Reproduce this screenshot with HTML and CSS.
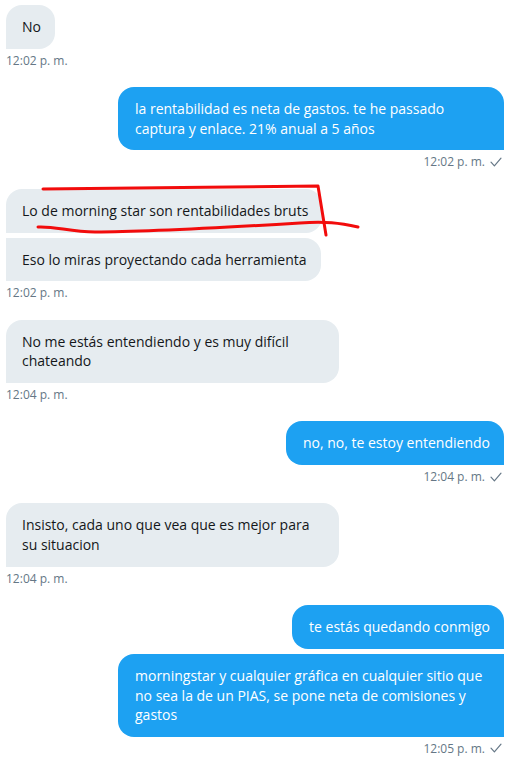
FILE: index.html
```html
<!DOCTYPE html>
<html lang="es">
<head>
<meta charset="utf-8">
<title>Mensajes</title>
<link rel="stylesheet" href="styles.css">
</head>
<body>
<main class="chat">
  <section class="group recv">
    <div class="bubble">No</div>
    <div class="time">12:02 p. m.</div>
  </section>

  <section class="group sent">
    <div class="bubble">la rentabilidad es neta de gastos. te he passado captura y enlace. 21% anual a 5 años</div>
    <div class="time">12:02 p. m. <svg class="check" viewBox="0 0 12 10" width="12" height="10"><path d="M1 5.2 L4.4 8.8 L11 1.2"/></svg></div>
  </section>

  <section class="group recv">
    <div class="bubble">Lo de morning star son rentabilidades bruts</div>
    <div class="bubble">Eso lo miras proyectando cada herramienta</div>
    <div class="time">12:02 p. m.</div>
  </section>

  <section class="group recv">
    <div class="bubble">No me estás entendiendo y es muy difícil chateando</div>
    <div class="time">12:04 p. m.</div>
  </section>

  <section class="group sent">
    <div class="bubble">no, no, te estoy entendiendo</div>
    <div class="time">12:04 p. m. <svg class="check" viewBox="0 0 12 10" width="12" height="10"><path d="M1 5.2 L4.4 8.8 L11 1.2"/></svg></div>
  </section>

  <section class="group recv">
    <div class="bubble">Insisto, cada uno que vea que es mejor para su situacion</div>
    <div class="time">12:04 p. m.</div>
  </section>

  <section class="group sent">
    <div class="bubble">te estás quedando conmigo</div>
    <div class="bubble">morningstar y cualquier gráfica en cualquier sitio que no sea la de un PIAS, se pone neta de comisiones y gastos</div>
    <div class="time">12:05 p. m. <svg class="check" viewBox="0 0 12 10" width="12" height="10"><path d="M1 5.2 L4.4 8.8 L11 1.2"/></svg></div>
  </section>
</main>

<svg class="scribble" viewBox="0 0 508 765" width="508" height="765" aria-hidden="true">
  <path d="M43 189 C 120 188, 230 187, 318 186 L 326 235"/>
  <path d="M38 227 C 55 226, 70 232, 95 232 C 150 232, 250 226, 300 223 C 325 221, 340 223, 358 227"/>
</svg>
</body>
</html>
```
FILE: styles.css
```css
html, body {
  margin: 0;
  padding: 0;
  background: #ffffff;
}

body {
  position: relative;
  width: 508px;
  min-height: 765px;
  font-family: "Open Sans", "Noto Sans", sans-serif;
  -webkit-font-smoothing: antialiased;
}

.chat {
  display: flex;
  flex-direction: column;
  gap: 18.4px;
  padding: 5px 4px 0 6px;
}

.group {
  display: flex;
  flex-direction: column;
  gap: 5px;
}

.group.recv {
  align-items: flex-start;
}

.group.sent {
  align-items: flex-end;
}

.bubble {
  box-sizing: border-box;
  font-size: 14px;
  line-height: 19.69px;
  padding: 12px 14px 12px 16px;
  border-radius: 16px;
}

.recv .bubble {
  max-width: 333px;
  background: #e6ecf0;
  color: #14171a;
  border-bottom-left-radius: 0;
}

.recv .bubble + .bubble {
  border-top-left-radius: 0;
}

.sent .bubble {
  max-width: 386px;
  background: #1da1f2;
  color: #ffffff;
  padding-left: 17px;
  border-bottom-right-radius: 0;
}

.sent .bubble + .bubble {
  border-top-right-radius: 0;
}

.time {
  display: flex;
  align-items: center;
  gap: 5px;
  margin-top: -2px;
  font-size: 12px;
  line-height: 17px;
  color: #657786;
}

.sent .time {
  padding-right: 2px;
}

.check {
  display: block;
  fill: none;
  stroke: #657786;
  stroke-width: 1.2;
  stroke-linecap: round;
  stroke-linejoin: round;
}

.scribble {
  position: absolute;
  top: 0;
  left: 0;
  pointer-events: none;
}

.scribble path {
  fill: none;
  stroke: #f20c0c;
  stroke-width: 3;
  stroke-linecap: round;
  stroke-linejoin: round;
}
```
